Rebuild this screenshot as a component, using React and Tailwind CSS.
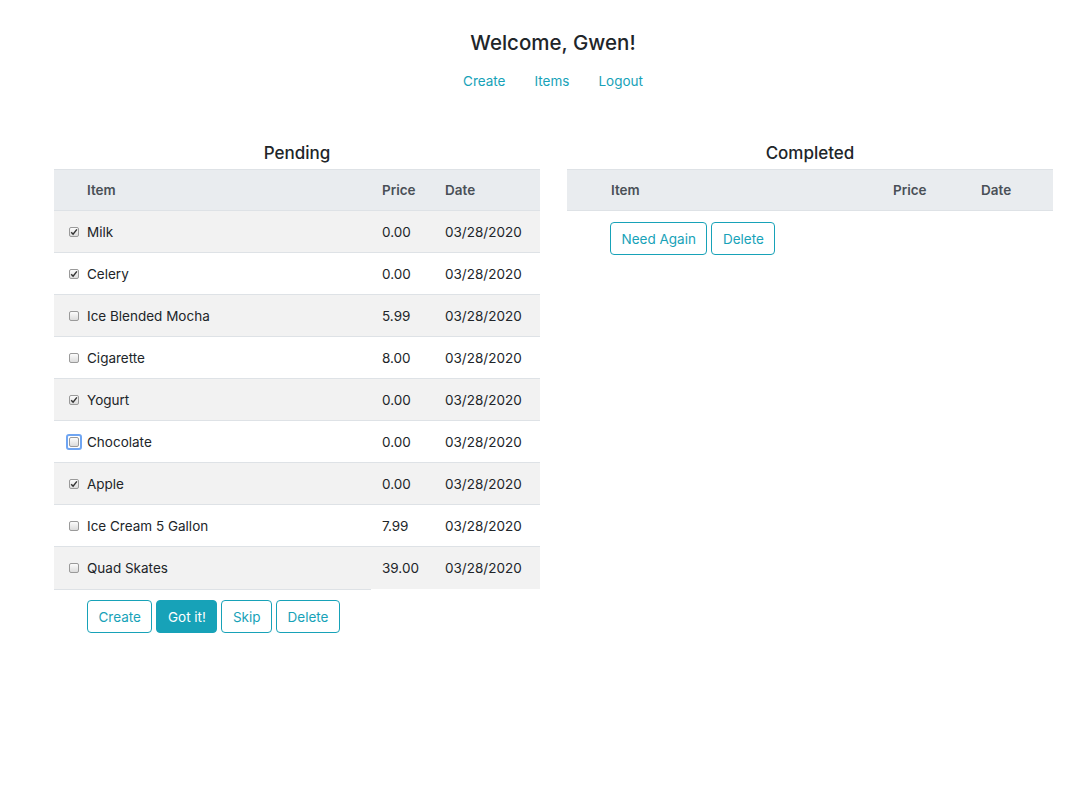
import React from "react";

const pending = [
  { name: "Milk", price: "0.00", date: "03/28/2020", checked: true },
  { name: "Celery", price: "0.00", date: "03/28/2020", checked: true },
  { name: "Ice Blended Mocha", price: "5.99", date: "03/28/2020", checked: false },
  { name: "Cigarette", price: "8.00", date: "03/28/2020", checked: false },
  { name: "Yogurt", price: "0.00", date: "03/28/2020", checked: true },
  { name: "Chocolate", price: "0.00", date: "03/28/2020", checked: false, focus: true },
  { name: "Apple", price: "0.00", date: "03/28/2020", checked: true },
  { name: "Ice Cream 5 Gallon", price: "7.99", date: "03/28/2020", checked: false },
  { name: "Quad Skates", price: "39.00", date: "03/28/2020", checked: false },
];

function Check({ checked, focus }) {
  return (
    <span
      className={
        "inline-flex items-center justify-center rounded-[3px] " +
        (focus ? "border-[2px] border-[#6fa5f2] p-[1px]" : "")
      }
    >
      <span className="flex h-[10px] w-[10px] items-center justify-center rounded-[2px] border border-[#9a9a9a] bg-gradient-to-b from-[#fcfcfc] to-[#dcdcdc]">
        {checked && (
          <svg width="8" height="8" viewBox="0 0 8 8">
            <path d="M1.2 4.2 L3.1 6.2 L6.9 1.4" fill="none" stroke="#333" strokeWidth="1.5" />
          </svg>
        )}
      </span>
    </span>
  );
}

function Btn({ children, solid }) {
  return (
    <button
      className={
        "h-[33px] rounded-[4px] border border-[#17a2b8] px-[10.5px] text-[13.5px] " +
        (solid ? "bg-[#17a2b8] text-white" : "bg-white text-[#17a2b8]")
      }
    >
      {children}
    </button>
  );
}

export default function App() {
  return (
    <div className="min-h-screen bg-white font-['Inter',sans-serif] text-[#212529]">
      <div className="flex flex-col items-center pl-[15px] pt-[29px]">
        <h1 className="text-[20.5px] font-medium leading-[28px]">Welcome, Gwen!</h1>
        <nav className="mt-[6px] flex gap-[29px] py-[8px] text-[13.5px] text-[#17a2b8]">
          <a>Create</a>
          <a>Items</a>
          <a>Logout</a>
        </nav>
      </div>

      <div className="mt-[42px] flex gap-[27px] pl-[54px]">
        {/* Pending */}
        <div className="w-[486px]">
          <h2 className="mb-[4px] text-center text-[17px] font-medium leading-[24px]">Pending</h2>
          <div className="flex h-[42px] items-center border-t border-b border-[#dee2e6] bg-[#e9ecef] text-[13.5px] font-semibold text-[#495057]">
            <div className="w-[316px] pl-[33px]">Item</div>
            <div className="w-[63px] pl-[12px]">Price</div>
            <div className="pl-[12px]">Date</div>
          </div>
          {pending.map((p, i) => (
            <div
              key={p.name}
              className={
                "flex h-[42px] items-center text-[13.5px] " +
                (i % 2 === 0 ? "bg-[#f2f2f2] " : "bg-white ") +
                (i < pending.length - 1 ? "border-b border-[#dee2e6]" : "")
              }
            >
              <div className="flex w-[316px] items-center">
                <div className="flex w-[33px] justify-center pl-[6px]">
                  <Check checked={p.checked} focus={p.focus} />
                </div>
                <span>{p.name}</span>
              </div>
              <div className="w-[63px] pl-[12px]">{p.price}</div>
              <div className="pl-[12px]">{p.date}</div>
            </div>
          ))}
          <div className="w-[317px] border-t border-[#dee2e6] pl-[33px] pt-[10px]">
            <div className="flex gap-[4px]">
              <Btn>Create</Btn>
              <Btn solid>Got it!</Btn>
              <Btn>Skip</Btn>
              <Btn>Delete</Btn>
            </div>
          </div>
        </div>

        {/* Completed */}
        <div className="w-[486px]">
          <h2 className="mb-[4px] text-center text-[17px] font-medium leading-[24px]">Completed</h2>
          <div className="flex h-[42px] items-center border-t border-b border-[#dee2e6] bg-[#e9ecef] text-[13.5px] font-semibold text-[#495057]">
            <div className="w-[314px] pl-[44px]">Item</div>
            <div className="w-[88px] pl-[12px]">Price</div>
            <div className="pl-[12px]">Date</div>
          </div>
          <div className="flex gap-[4px] pl-[43px] pt-[11px]">
            <Btn>Need Again</Btn>
            <Btn>Delete</Btn>
          </div>
        </div>
      </div>
    </div>
  );
}
